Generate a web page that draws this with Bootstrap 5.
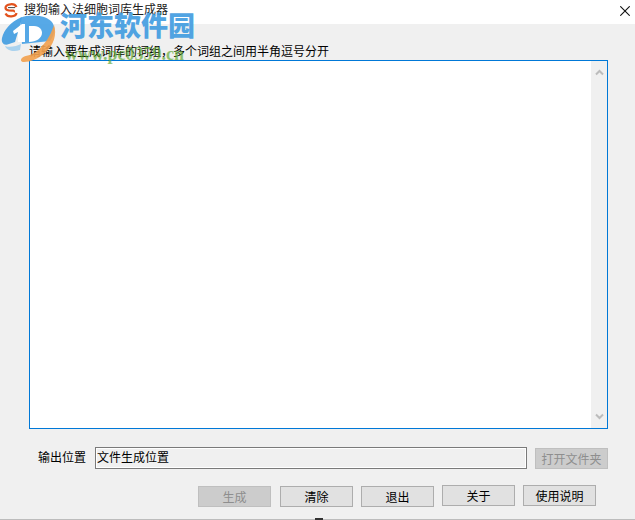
<!DOCTYPE html>
<html lang="zh"><head><meta charset="utf-8">
<link href="https://cdn.jsdelivr.net/npm/bootstrap@5.3.0/dist/css/bootstrap.min.css" rel="stylesheet">
<style>
html,body{margin:0;height:520px;overflow:hidden;background:#f0f0f0}
body{font-family:"Noto Sans CJK SC","Liberation Sans",sans-serif;font-size:12px;line-height:16px;color:#000}
.win{width:635px;height:520px;position:relative;border-bottom:1px solid #bcbcbc}
.tbar{height:24px;background:#fff;padding-left:4px}
.tbar .ttl{margin-left:6px;margin-top:1px;color:#222}
.closex{margin-left:auto;margin-right:5px;margin-top:6px}
.prompt{padding:19px 0 0 29px;height:36px;line-height:16px}
.editor{margin-left:29px;width:579px;height:369px;background:#fff;border:1px solid #0078d7;justify-content:flex-end}
.vbar{width:16px;background:#f0f0f0;height:100%}
.outrow{margin-top:18px;height:22px}
.outlbl{margin-left:38px;width:57px;padding-top:2px}
.outfield{width:432px;height:22px;border:1px solid #7a7a7a;box-shadow:inset -1px -1px 0 #fff,inset 1px 1px 0 #fff;background:#f0f0f0;border-radius:0;padding:0 0 3px 1px;font-size:12px;line-height:14px;color:#000}
.outfield[readonly]{background:#f0f0f0}
.wbtn{width:73px;height:21px;padding:0;border:1px solid #adadad;background:#e1e1e1;color:#000;border-radius:0;font-size:12px;line-height:18px}
.wbtn:disabled{background:#ccc;border-color:#bfbfbf;color:#8e8e8e;opacity:1}
.openb{margin-left:8px;margin-top:1px}
.acts{margin:17px 0 0 198px;gap:8px;align-items:flex-start}
.second{margin-left:1px}
.lower{margin-top:-1px}
.wmk{position:absolute;left:0;top:0;pointer-events:none}
.wmt{position:absolute;left:60px;top:8px;font:bold 27px/34px "Noto Sans CJK SC",sans-serif;font-weight:900;color:#3f9be0;opacity:.9;white-space:nowrap}
.wmu{position:absolute;left:65px;top:44px;font:bold 18px/20px "Liberation Serif",serif;color:#5aa62c;opacity:.65;white-space:nowrap}
.tick{position:absolute;left:315px;bottom:-1px;width:8px;height:2px;background:#333}
</style></head>
<body>
<div class="win d-flex flex-column">
 <div class="tbar d-flex align-items-start">
  <svg width="14" height="15" viewBox="0 0 14 15" class="flex-shrink-0" style="margin-top:3px"><path d="M12.5 4C11.5 2 9 1 6.5 1.3 3.5 1.6 1.6 2.8 1.5 4.8c0 1.6 1.2 2.3 3.2 2.5l4.3.3c1 .1 1.2.8.6 1.4" fill="none" stroke="#e2521d" stroke-width="2.2"/><path d="M1.5 10.5c1.2 2.4 3.4 3.2 6 2.9 2.6-.3 4.7-1.6 5-3.4" fill="none" stroke="#e2521d" stroke-width="2.2"/><path d="M4 4.6h7" stroke="#444" stroke-width="1"/></svg>
  <span class="ttl">搜狗输入法细胞词库生成器</span>
  <svg class="closex" width="10" height="10" viewBox="0 0 10 10"><path d="M.3.3l9.4 9.4M9.7.3L.3 9.7" stroke="#111" stroke-width="1.1"/></svg>
 </div>
 <div class="prompt">请输入要生成词库的词组，多个词组之间用半角逗号分开</div>
 <div class="editor d-flex">
  <div class="vbar d-flex flex-column justify-content-between align-items-center py-1">
   <svg width="9" height="7" viewBox="0 0 9 7" class="mt-1"><path d="M1 5.5l3.5-3.5L8 5.5" fill="none" stroke="#bcbcbc" stroke-width="2"/></svg>
   <svg width="9" height="7" viewBox="0 0 9 7" class="mb-1"><path d="M1 1.5L4.5 5 8 1.5" fill="none" stroke="#bcbcbc" stroke-width="2"/></svg>
  </div>
 </div>
 <div class="outrow d-flex">
  <div class="outlbl">输出位置</div>
  <input class="form-control outfield" value="文件生成位置" readonly>
  <button class="btn wbtn openb" disabled>打开文件夹</button>
 </div>
 <div class="acts d-flex">
  <button class="btn wbtn" disabled>生成</button>
  <button class="btn wbtn second">清除</button>
  <button class="btn wbtn">退出</button>
  <button class="btn wbtn lower">关于</button>
  <button class="btn wbtn lower">使用说明</button>
 </div>
 <div class="tick"></div>
 <div class="wmk">
  <svg width="60" height="66" viewBox="0 0 60 66">
   <path d="M22 17C10 22 4 30 2 38c-1 5 2 8 7 6l6-2 6-20z" fill="#3f9be0" opacity=".9"/>
   <path d="M20 18C30 14 44 15 51 21c5 5 4 13-1 20L22 44z" fill="#45a0e4" opacity=".9"/>
   <path d="M13 31l9-7h3v18h-7V32l-4 2z" fill="#fff"/>
   <path d="M29 26h5c6 0 8 4 8 7 0 5-6 9-13 9z" fill="#fff"/>
   <path d="M54 25c3 9 0 20-9 28-7 6-15 9-21 9-3 0-4-2-2-4 3-3 10-2 16-8 7-6 12-13 16-25z" fill="#f2a04d" opacity=".9"/>
   <path d="M5 46c5 2 12 0 16-2l-1 6c-6 2-13 1-15-4z" fill="#8cc4ec" opacity=".7"/>
  </svg>
  <div class="wmt">河东软件园</div>
  <div class="wmu">www.pc0359.cn</div>
 </div>
</div>
</body></html>
